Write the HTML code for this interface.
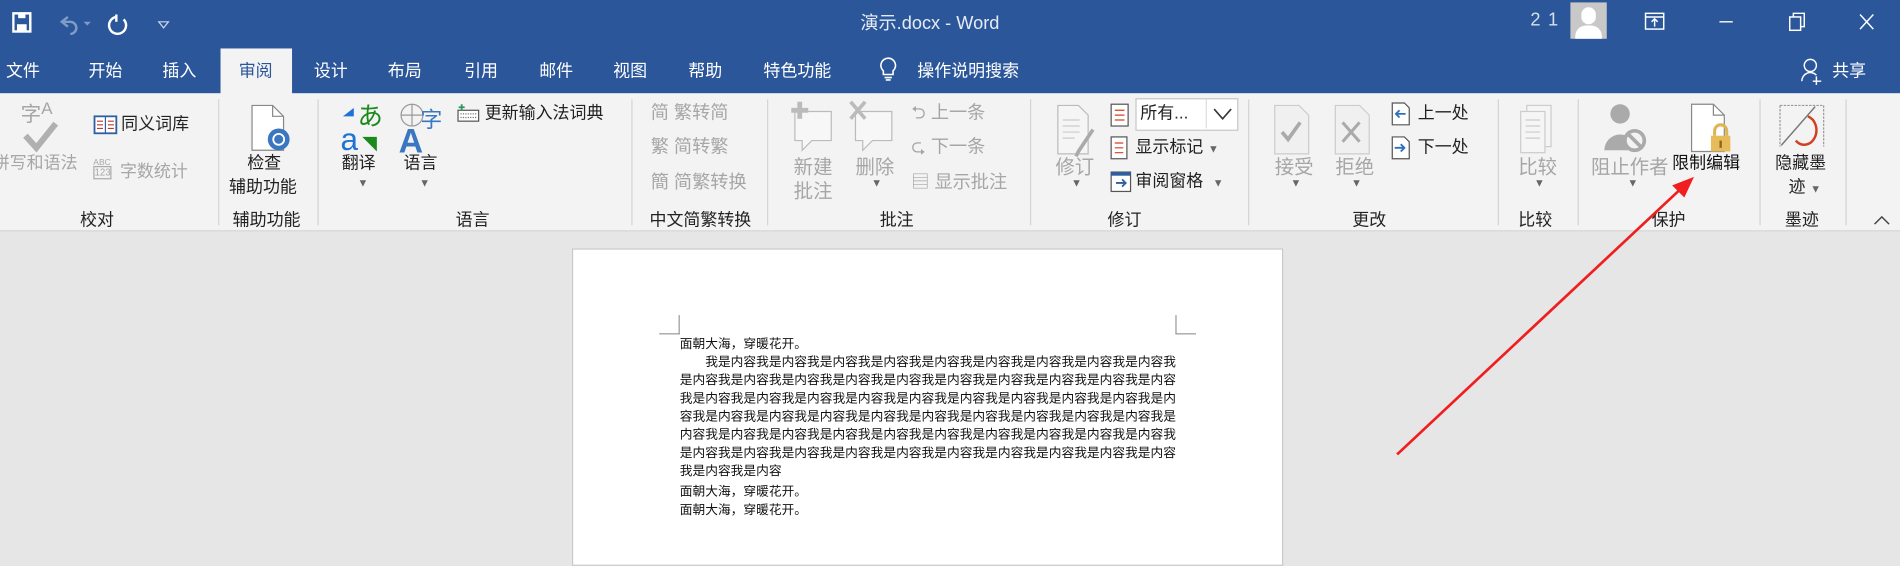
<!DOCTYPE html>
<html><head><meta charset="utf-8">
<style>
html,body{margin:0;padding:0;width:1900px;height:545px;overflow:hidden;background:#e6e6e6}
#w{position:absolute;left:0;top:0;width:1568px;height:450px;transform:scale(1.21173);transform-origin:0 0;font-family:"Liberation Sans","Noto Sans CJK SC",sans-serif;}
.a{position:absolute;white-space:nowrap}
.t{font-size:14px;color:#fff}
.r{font-size:14px;color:#222}
.g{color:#a6a6a6}
.sep{position:absolute;top:82px;width:1px;height:104px;background:#d4d4d4}
.lab{position:absolute;top:171px;font-size:14px;color:#222;white-space:nowrap;transform:translateX(-50%)}
.dd{font-size:9px;color:#666}
.doc{font-size:10.5px;color:#111;line-height:15px;font-family:"Noto Sans CJK SC",sans-serif}
</style></head><body><div id="w">
<div class="a" style="left:0;top:0;width:1568px;height:77px;background:#2b579a"></div>
<svg class="a" style="left:10px;top:9px" width="140" height="20" viewBox="0 0 140 20">
<rect x="1" y="2" width="14" height="15" fill="none" stroke="#fff" stroke-width="2"/><rect x="4" y="11" width="8" height="6" fill="#fff"/><rect x="5" y="2" width="6" height="4" fill="#fff"/>
<path d="M46 5 l-5 4 l5 4 M41 9 h7 a5 5 0 0 1 0 10" fill="none" stroke="#7f9bc8" stroke-width="2"/>
<path d="M59 9 l3 3 l3 -3z" fill="#7f9bc8"/>
<path d="M86 5 a7 7 0 1 0 6 2 M86 3 v6" fill="none" stroke="#fff" stroke-width="2"/>
<path d="M121 9 h8 l-4 5z" fill="none" stroke="#c9d6ea" stroke-width="1"/>
</svg>
<div class="a" style="left:710px;top:8px;font-size:15px;color:#e6ecf5">演示.docx  -  Word</div>
<div class="a" style="left:1263px;top:8px;font-size:15px;color:#d6e0ef;letter-spacing:1px">2 1</div>
<div class="a" style="left:1296px;top:2px;width:30px;height:30px;background:#c8c8c8;overflow:hidden"><div style="position:absolute;left:9px;top:4px;width:12px;height:14px;border-radius:6px;background:#fff"></div><div style="position:absolute;left:4px;top:19px;width:22px;height:14px;border-radius:9px 9px 0 0;background:#fff"></div></div>
<svg class="a" style="left:1355px;top:8px" width="200" height="20" viewBox="0 0 200 20">
<rect x="3" y="3" width="15" height="13" fill="none" stroke="#fff" stroke-width="1.2"/><path d="M3 6 h15 M10.5 14 v-6 M8 10 l2.5-2.5 l2.5 2.5" fill="none" stroke="#fff" stroke-width="1.2"/>
<path d="M64 10 h11" stroke="#fff" stroke-width="1.2"/>
<rect x="122" y="6" width="9" height="11" fill="none" stroke="#fff" stroke-width="1.2"/><path d="M125 6 v-3 h9 v11 h-3" fill="none" stroke="#fff" stroke-width="1.2"/>
<path d="M180 4 l11 12 M191 4 l-11 12" stroke="#fff" stroke-width="1.2"/>
</svg>
<div class="a" style="left:182px;top:40px;width:59px;height:38px;background:#f3f3f3"></div>
<div class="a t" style="left:5px;top:48px">文件</div>
<div class="a t" style="left:73px;top:48px">开始</div>
<div class="a t" style="left:134px;top:48px">插入</div>
<div class="a t" style="left:197px;top:48px;color:#2b579a">审阅</div>
<div class="a t" style="left:259px;top:48px">设计</div>
<div class="a t" style="left:320px;top:48px">布局</div>
<div class="a t" style="left:383px;top:48px">引用</div>
<div class="a t" style="left:445px;top:48px">邮件</div>
<div class="a t" style="left:506px;top:48px">视图</div>
<div class="a t" style="left:568px;top:48px">帮助</div>
<div class="a t" style="left:630px;top:48px">特色功能</div>
<svg class="a" style="left:724px;top:46px" width="18" height="22" viewBox="0 0 18 22"><path d="M9 2 a6 6 0 0 1 4 10.5 v3 h-8 v-3 a6 6 0 0 1 4-10.5z M6 18 h6 M7 20 h4" fill="none" stroke="#fff" stroke-width="1.3"/></svg>
<div class="a t" style="left:757px;top:48px">操作说明搜索</div>
<svg class="a" style="left:1486px;top:47px" width="20" height="24" viewBox="0 0 20 24"><circle cx="8" cy="7" r="5" fill="none" stroke="#fff" stroke-width="1.2"/><path d="M1 20 a7 7 0 0 1 12-5 M13 16 v7 M10 20 h7" fill="none" stroke="#fff" stroke-width="1.2"/></svg>
<div class="a t" style="left:1512px;top:48px">共享</div>
<div class="a" style="left:0;top:77px;width:1568px;height:113px;background:#f3f3f3;border-bottom:1px solid #d5d5d5"></div>
<div class="sep" style="left:180px"></div><div class="sep" style="left:262px"></div><div class="sep" style="left:521px"></div><div class="sep" style="left:633px"></div><div class="sep" style="left:850px"></div><div class="sep" style="left:1030px"></div><div class="sep" style="left:1236px"></div><div class="sep" style="left:1302px"></div><div class="sep" style="left:1452px"></div><div class="sep" style="left:1523px"></div>
<div class="lab" style="left:80px">校对</div><div class="lab" style="left:220px">辅助功能</div><div class="lab" style="left:390px">语言</div><div class="lab" style="left:578px">中文简繁转换</div><div class="lab" style="left:740px">批注</div><div class="lab" style="left:928px">修订</div><div class="lab" style="left:1130px">更改</div><div class="lab" style="left:1267px">比较</div><div class="lab" style="left:1377px">保护</div><div class="lab" style="left:1487px">墨迹</div>
<svg class="a" style="left:1545px;top:177px" width="16" height="10"><path d="M2 8 l6-6 l6 6" fill="none" stroke="#444" stroke-width="1.2"/></svg>
<div class="a g" style="left:17px;top:80px;font-size:17px">字<span style="font-size:14px;vertical-align:6px">A</span></div>
<svg class="a" style="left:18px;top:100px" width="32" height="26"><path d="M3 12 l9 10 l16-20" fill="none" stroke="#b0b0b0" stroke-width="5"/></svg>
<div class="a g" style="left:-6px;top:124px;font-size:14px">拼写和语法</div>
<svg class="a" style="left:77px;top:95px" width="20" height="16"><rect x="1" y="1" width="18" height="14" fill="#fff" stroke="#2e5f9e" stroke-width="1.5"/><path d="M10 1 v14" stroke="#2e5f9e"/><path d="M3 5 h5 M3 8 h5 M3 11 h5 M12 5 h5 M12 8 h5 M12 11 h5" stroke="#c0392b" stroke-width="1"/></svg>
<div class="a r" style="left:100px;top:92px">同义词库</div>
<div class="a g" style="left:77px;top:131px;font-size:7px;line-height:8px">ABC<br><span style="border:1px solid #aaa;font-size:8px">123</span></div>
<div class="a g" style="left:99px;top:131px;font-size:14px">字数统计</div>
<svg class="a" style="left:205px;top:85px" width="36" height="42"><path d="M3 2 h17 l9 9 v28 h-26z" fill="#fff" stroke="#888"/><path d="M20 2 v9 h9" fill="none" stroke="#888"/><circle cx="25" cy="30" r="9" fill="#3a77c0"/><circle cx="25" cy="30" r="4.5" fill="none" stroke="#fff" stroke-width="1.5"/></svg>
<div class="a r" style="left:204px;top:124px">检查</div>
<div class="a r" style="left:189px;top:144px">辅助功能</div>
<svg class="a" style="left:280px;top:83px" width="90" height="44"><path d="M12 6 l-9 7 h9z" fill="#1e73d6"/><text x="15" y="20" font-size="21" fill="#1b8a1b" font-family="Noto Sans CJK JP">あ</text><text x="1" y="41" font-size="26" fill="#1e73d6" font-family="Liberation Sans">a</text><path d="M19 30 l12 0 l0 12z" fill="#1b8a1b"/><circle cx="60" cy="12" r="9" fill="none" stroke="#999"/><path d="M51 12 h18 M60 3 v18" stroke="#999"/><text x="49" y="43" font-size="28" fill="#3a77c0" font-weight="bold" font-family="Liberation Sans">A</text><text x="67" y="22" font-size="18" fill="#3a77c0" font-family="Noto Sans CJK SC">字</text></svg>
<div class="a r" style="left:282px;top:124px">翻译</div><div class="a dd" style="left:295px;top:146px">▼</div>
<div class="a r" style="left:333px;top:124px">语言</div><div class="a dd" style="left:346px;top:146px">▼</div>
<svg class="a" style="left:377px;top:85px" width="20" height="16"><rect x="1" y="6" width="17" height="9" fill="#fff" stroke="#555"/><path d="M3 9 h13 M3 12 h13" stroke="#777" stroke-dasharray="1 1"/><path d="M4 1 v5 M1.5 3.5 h5" stroke="#2a9a5a" stroke-width="1.5"/></svg>
<div class="a r" style="left:400px;top:83px">更新输入法词典</div>
<div class="a g" style="left:537px;top:82px;font-size:15px">简 繁转简</div>
<div class="a g" style="left:537px;top:110px;font-size:15px">繁 简转繁</div>
<div class="a g" style="left:537px;top:139px;font-size:15px">簡 简繁转换</div>
<svg class="a" style="left:650px;top:82px" width="95" height="48"><path d="M6 10 h30 v24 h-16 l-8 8 v-8 h-6z" fill="#f7f7f7" stroke="#bbb"/><path d="M10 2 v14 M3 9 h14" stroke="#bbb" stroke-width="4"/><path d="M56 10 h30 v24 h-16 l-8 8 v-8 h-6z" fill="#f7f7f7" stroke="#bbb"/><path d="M52 2 l12 14 M64 2 l-12 14" stroke="#bbb" stroke-width="3"/></svg>
<div class="a g" style="left:655px;top:124px">新建</div><div class="a g" style="left:655px;top:144px">批注</div>
<div class="a g" style="left:706px;top:124px">删除</div><div class="a dd g" style="left:719px;top:146px">▼</div>
<div class="a g" style="left:752px;top:82px;font-size:15px">⮌ 上一条</div>
<div class="a g" style="left:752px;top:110px;font-size:15px">⮎ 下一条</div>
<div class="a g" style="left:752px;top:139px;font-size:15px">▤ 显示批注</div>
<svg class="a" style="left:870px;top:85px" width="36" height="46"><path d="M3 2 h17 l8 8 v32 h-25z" fill="#f5f5f5" stroke="#bbb"/><path d="M7 14 h14 M7 19 h14 M7 24 h14 M7 29 h10" stroke="#ccc"/><path d="M32 22 l-12 18 l-2 4" stroke="#aaa" stroke-width="3"/></svg>
<div class="a g" style="left:871px;top:124px">修订</div><div class="a dd g" style="left:884px;top:146px">▼</div>
<svg class="a" style="left:915px;top:84px" width="20" height="22"><rect x="2" y="2" width="14" height="18" fill="#fff" stroke="#555"/><path d="M5 7 h8 M5 11 h8 M5 15 h8" stroke="#d04020"/></svg>
<div class="a" style="left:937px;top:81px;width:83px;height:25px;border:1px solid #c6c6c6;background:#fff"></div>
<div class="a r" style="left:941px;top:83px">所有...</div>
<div class="a" style="left:995px;top:82px;width:1px;height:24px;background:#ddd"></div>
<svg class="a" style="left:1000px;top:88px" width="18" height="12"><path d="M2 2 l7 8 l7-8" fill="none" stroke="#333" stroke-width="1.3"/></svg>
<svg class="a" style="left:916px;top:112px" width="16" height="20"><rect x="1" y="1" width="13" height="18" fill="#fff" stroke="#555"/><path d="M4 6 h7 M4 10 h7 M4 14 h7" stroke="#d04020"/></svg>
<div class="a r" style="left:937px;top:111px">显示标记 <span class="dd">▼</span></div>
<svg class="a" style="left:916px;top:141px" width="18" height="18"><rect x="1" y="1" width="16" height="16" fill="#fff" stroke="#555"/><rect x="1" y="1" width="16" height="3" fill="#2e5f9e"/><path d="M5 10 h8 M10 7 l3 3 l-3 3" fill="none" stroke="#2e5f9e" stroke-width="1.5"/></svg>
<div class="a r" style="left:937px;top:139px">审阅窗格 <span class="dd" style="margin-left:4px">▼</span></div>
<svg class="a" style="left:1050px;top:85px" width="90" height="44"><path d="M2 2 h20 l8 8 v32 h-28z" fill="#f0f0f0" stroke="#ccc"/><path d="M8 24 l5 6 l10-14" fill="none" stroke="#aaa" stroke-width="3"/><path d="M52 2 h20 l8 8 v32 h-28z" fill="#f0f0f0" stroke="#ccc"/><path d="M58 16 l14 16 M72 16 l-14 16" stroke="#aaa" stroke-width="2.5"/></svg>
<div class="a g" style="left:1052px;top:124px">接受</div><div class="a dd g" style="left:1065px;top:146px">▼</div>
<div class="a g" style="left:1102px;top:124px">拒绝</div><div class="a dd g" style="left:1115px;top:146px">▼</div>
<svg class="a" style="left:1148px;top:84px" width="16" height="20"><path d="M1 1 h10 l4 4 v14 h-14z" fill="#fff" stroke="#555"/><path d="M12 10 h-8 M7 7 l-3 3 l3 3" fill="none" stroke="#2e6fc0" stroke-width="1.5"/></svg>
<div class="a r" style="left:1170px;top:83px">上一处</div>
<svg class="a" style="left:1148px;top:112px" width="16" height="20"><path d="M1 1 h10 l4 4 v14 h-14z" fill="#fff" stroke="#555"/><path d="M3 10 h8 M8 7 l3 3 l-3 3" fill="none" stroke="#2e6fc0" stroke-width="1.5"/></svg>
<div class="a r" style="left:1170px;top:111px">下一处</div>
<svg class="a" style="left:1252px;top:85px" width="32" height="44"><rect x="8" y="2" width="20" height="34" fill="#f5f5f5" stroke="#ccc"/><rect x="3" y="7" width="20" height="34" fill="#f5f5f5" stroke="#ccc"/><path d="M7 14 h12 M7 19 h12 M7 24 h12 M7 29 h12" stroke="#ccc"/></svg>
<div class="a g" style="left:1253px;top:124px">比较</div><div class="a dd g" style="left:1266px;top:146px">▼</div>
<svg class="a" style="left:1323px;top:84px" width="40" height="48"><circle cx="14" cy="10" r="8" fill="#aaa"/><path d="M1 40 a13 13 0 0 1 26 0z" fill="#aaa"/><circle cx="26" cy="32" r="8" fill="#f3f3f3" stroke="#aaa" stroke-width="3"/><path d="M20 26 l12 12" stroke="#aaa" stroke-width="3"/></svg>
<div class="a g" style="left:1313px;top:124px">阻止作者</div><div class="a dd g" style="left:1343px;top:146px">▼</div>
<svg class="a" style="left:1393px;top:84px" width="40" height="48"><path d="M3 2 h18 l9 9 v30 h-27z" fill="#fff" stroke="#888"/><path d="M21 2 v9 h9" fill="none" stroke="#888"/><path d="M22 28 v-4 a5 5 0 0 1 10 0 v4" fill="none" stroke="#e0b550" stroke-width="2.5"/><rect x="19" y="28" width="16" height="13" fill="#e8bb5a"/><rect x="26" y="32" width="2" height="6" fill="#8a6a20"/></svg>
<div class="a r" style="left:1380px;top:124px;color:#111">限制编辑</div>
<svg class="a" style="left:1466px;top:84px" width="44" height="46"><path d="M3 3 h36 v34" fill="none" stroke="#999" stroke-dasharray="2 1"/><path d="M3 3 v34" stroke="#999" stroke-dasharray="2 1"/><path d="M4 36 l28-32" stroke="#777" stroke-width="1.2"/><path d="M26 12 a10 12 0 1 1 -10 20" fill="none" stroke="#d04020" stroke-width="2"/></svg>
<div class="a r" style="left:1465px;top:124px">隐藏墨</div>
<div class="a r" style="left:1476px;top:144px">迹 <span class="dd">▼</span></div>
<div class="a" style="left:472px;top:205px;width:585px;height:260px;background:#fff;border:1px solid #c8c8c8"></div>
<div class="a" style="left:544px;top:260px;width:16px;height:15px;border-right:1px solid #999;border-bottom:1px solid #999"></div>
<div class="a" style="left:970px;top:260px;width:16px;height:15px;border-left:1px solid #999;border-bottom:1px solid #999"></div>
<div class="a doc" style="left:561px;top:276px;width:410px;white-space:normal">
<div>面朝大海，穿暖花开。</div>
<div style="text-indent:21px;word-break:break-all">我是内容我是内容我是内容我是内容我是内容我是内容我是内容我是内容我是内容我是内容我是内容我是内容我是内容我是内容我是内容我是内容我是内容我是内容我是内容我是内容我是内容我是内容我是内容我是内容我是内容我是内容我是内容我是内容我是内容我是内容我是内容我是内容我是内容我是内容我是内容我是内容我是内容我是内容我是内容我是内容我是内容我是内容我是内容我是内容我是内容我是内容我是内容我是内容我是内容我是内容我是内容我是内容我是内容我是内容我是内容我是内容我是内容我是内容我是内容我是内容</div>
<div style="margin-top:2px">面朝大海，穿暖花开。</div>
<div>面朝大海，穿暖花开。</div>
</div>
<svg class="a" style="left:0;top:0" width="1568" height="450"><path d="M1153 375 L1388 155" stroke="#f01e1e" stroke-width="2.2"/><path d="M1398 146 L1380 153 L1390 163z" fill="#f01e1e"/></svg>
</div></body></html>
